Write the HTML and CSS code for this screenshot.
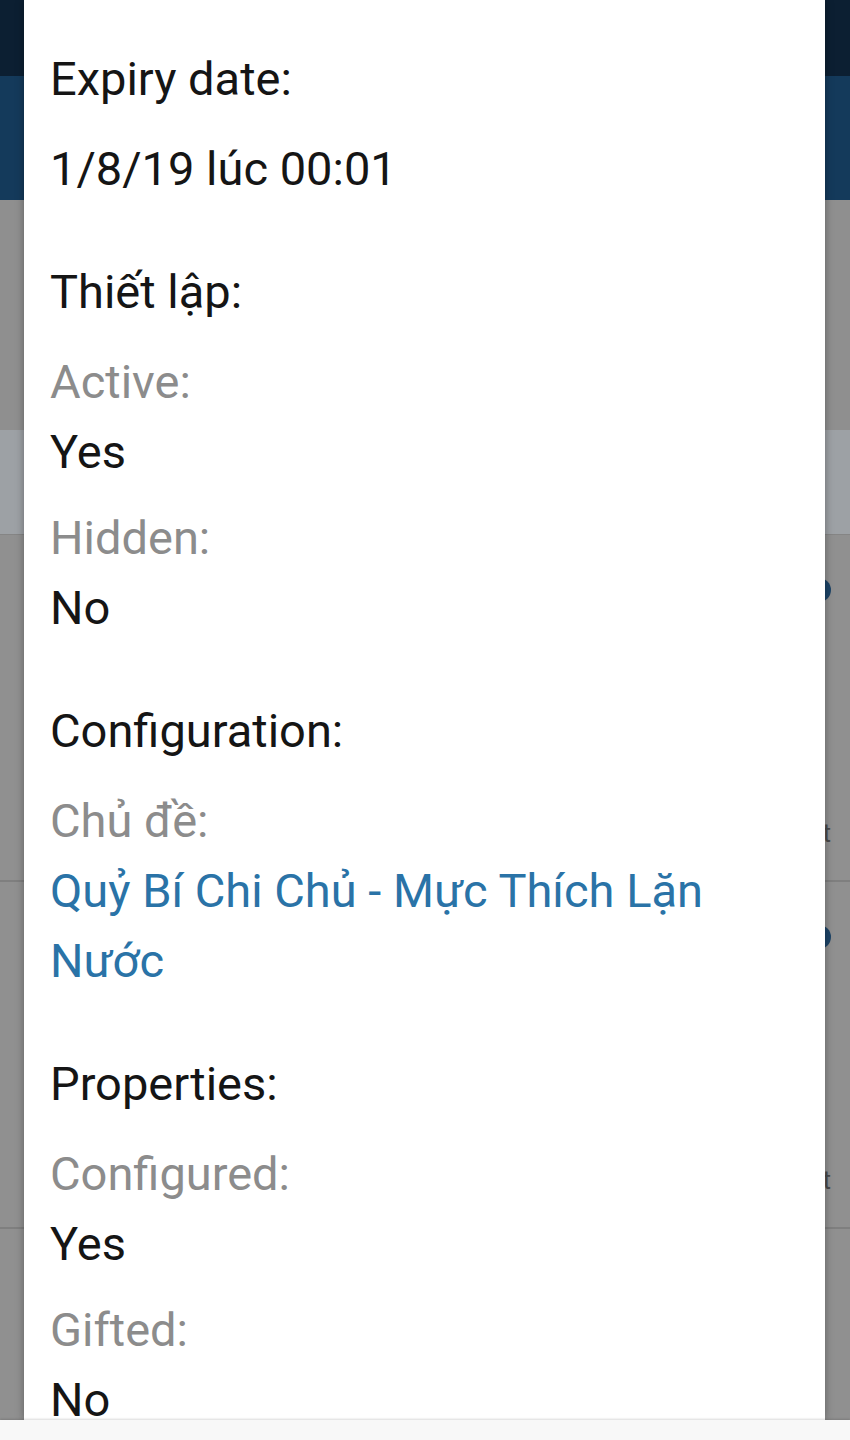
FILE: index.html
```html
<!DOCTYPE html>
<html lang="vi">
<head>
<meta charset="utf-8">
<title>Details</title>
<link rel="stylesheet" href="styles.css">
</head>
<body>
<div class="screen">
  <div class="backdrop">
    <div class="statusbar"></div>
    <div class="appbar"></div>
    <div class="pane"></div>
    <div class="band"></div>
    <div class="row">
      <span class="row-icon"></span>
      <span class="row-meta">Edit</span>
    </div>
    <div class="row">
      <span class="row-icon"></span>
      <span class="row-meta">Edit</span>
    </div>
    <div class="row last"></div>
  </div>

  <div class="dialog">
    <div class="section">
      <div class="heading">Expiry date:</div>
      <div class="value">1/8/19 lúc 00:01</div>
    </div>
    <div class="section">
      <div class="heading">Thiết lập:</div>
      <div class="field">
        <div class="label">Active:</div>
        <div class="value">Yes</div>
      </div>
      <div class="field">
        <div class="label">Hidden:</div>
        <div class="value">No</div>
      </div>
    </div>
    <div class="section">
      <div class="heading">Configuration:</div>
      <div class="field">
        <div class="label">Chủ đề:</div>
        <div class="value link">Quỷ Bí Chi Chủ - Mực Thích Lặn Nước</div>
      </div>
    </div>
    <div class="section">
      <div class="heading">Properties:</div>
      <div class="field">
        <div class="label">Configured:</div>
        <div class="value">Yes</div>
      </div>
      <div class="field">
        <div class="label">Gifted:</div>
        <div class="value">No</div>
      </div>
    </div>
  </div>

  <div class="navbar"></div>
</div>
</body>
</html>
```

FILE: styles.css
```css
* { box-sizing: border-box; }

html, body {
  margin: 0;
  padding: 0;
  background: #f8f8f8;
}

body {
  font-family: Roboto, "Noto Sans", "Liberation Sans", sans-serif;
}

.screen {
  position: relative;
  width: 850px;
  height: 1440px;
  overflow: hidden;
  display: flex;
  flex-direction: column;
}

.backdrop {
  height: 1420px;
  display: flex;
  flex-direction: column;
  background: #8e8e8e;
}

.statusbar {
  height: 76px;
  background: #0c1f32;
}

.appbar {
  height: 124px;
  background: #143a5b;
}

.pane {
  height: 230px;
  background: #8f8f8f;
}

.band {
  height: 105px;
  background: #9da1a5;
  border-bottom: 1px solid #858585;
}

.row {
  height: 347px;
  display: flex;
  flex-direction: column;
  align-items: flex-end;
  justify-content: space-between;
  padding: 43px 19px 32px 0;
  border-bottom: 2px solid #7f7f7f;
  background: #909090;
}

.row.last {
  flex: 1;
  border-bottom: none;
}

.row-icon {
  width: 24px;
  height: 24px;
  border-radius: 50%;
  background: #1c4366;
}

.row-meta {
  font-size: 26px;
  color: #4a4a4a;
}

.dialog {
  position: absolute;
  top: 0;
  left: 24px;
  width: 801px;
  height: 1420px;
  overflow: hidden;
  background: #ffffff;
  padding: 44px 24px 0 26px;
  box-shadow: 0 0 8px rgba(0, 0, 0, 0.35);
  font-size: 47px;
  line-height: 70px;
  color: #151515;
}

.section {
  display: flex;
  flex-direction: column;
  margin-bottom: 53px;
}

.heading {
  margin-bottom: 20px;
}

.field {
  display: flex;
  flex-direction: column;
  margin-bottom: 16px;
}

.field:last-child {
  margin-bottom: 0;
}

.label {
  color: #8c8c8c;
}

.link {
  color: #2a73a7;
}

.navbar {
  position: relative;
  z-index: 2;
  height: 20px;
  background: #f8f8f8;
  box-shadow: 0 -1px 2px rgba(0, 0, 0, 0.15);
}
```
